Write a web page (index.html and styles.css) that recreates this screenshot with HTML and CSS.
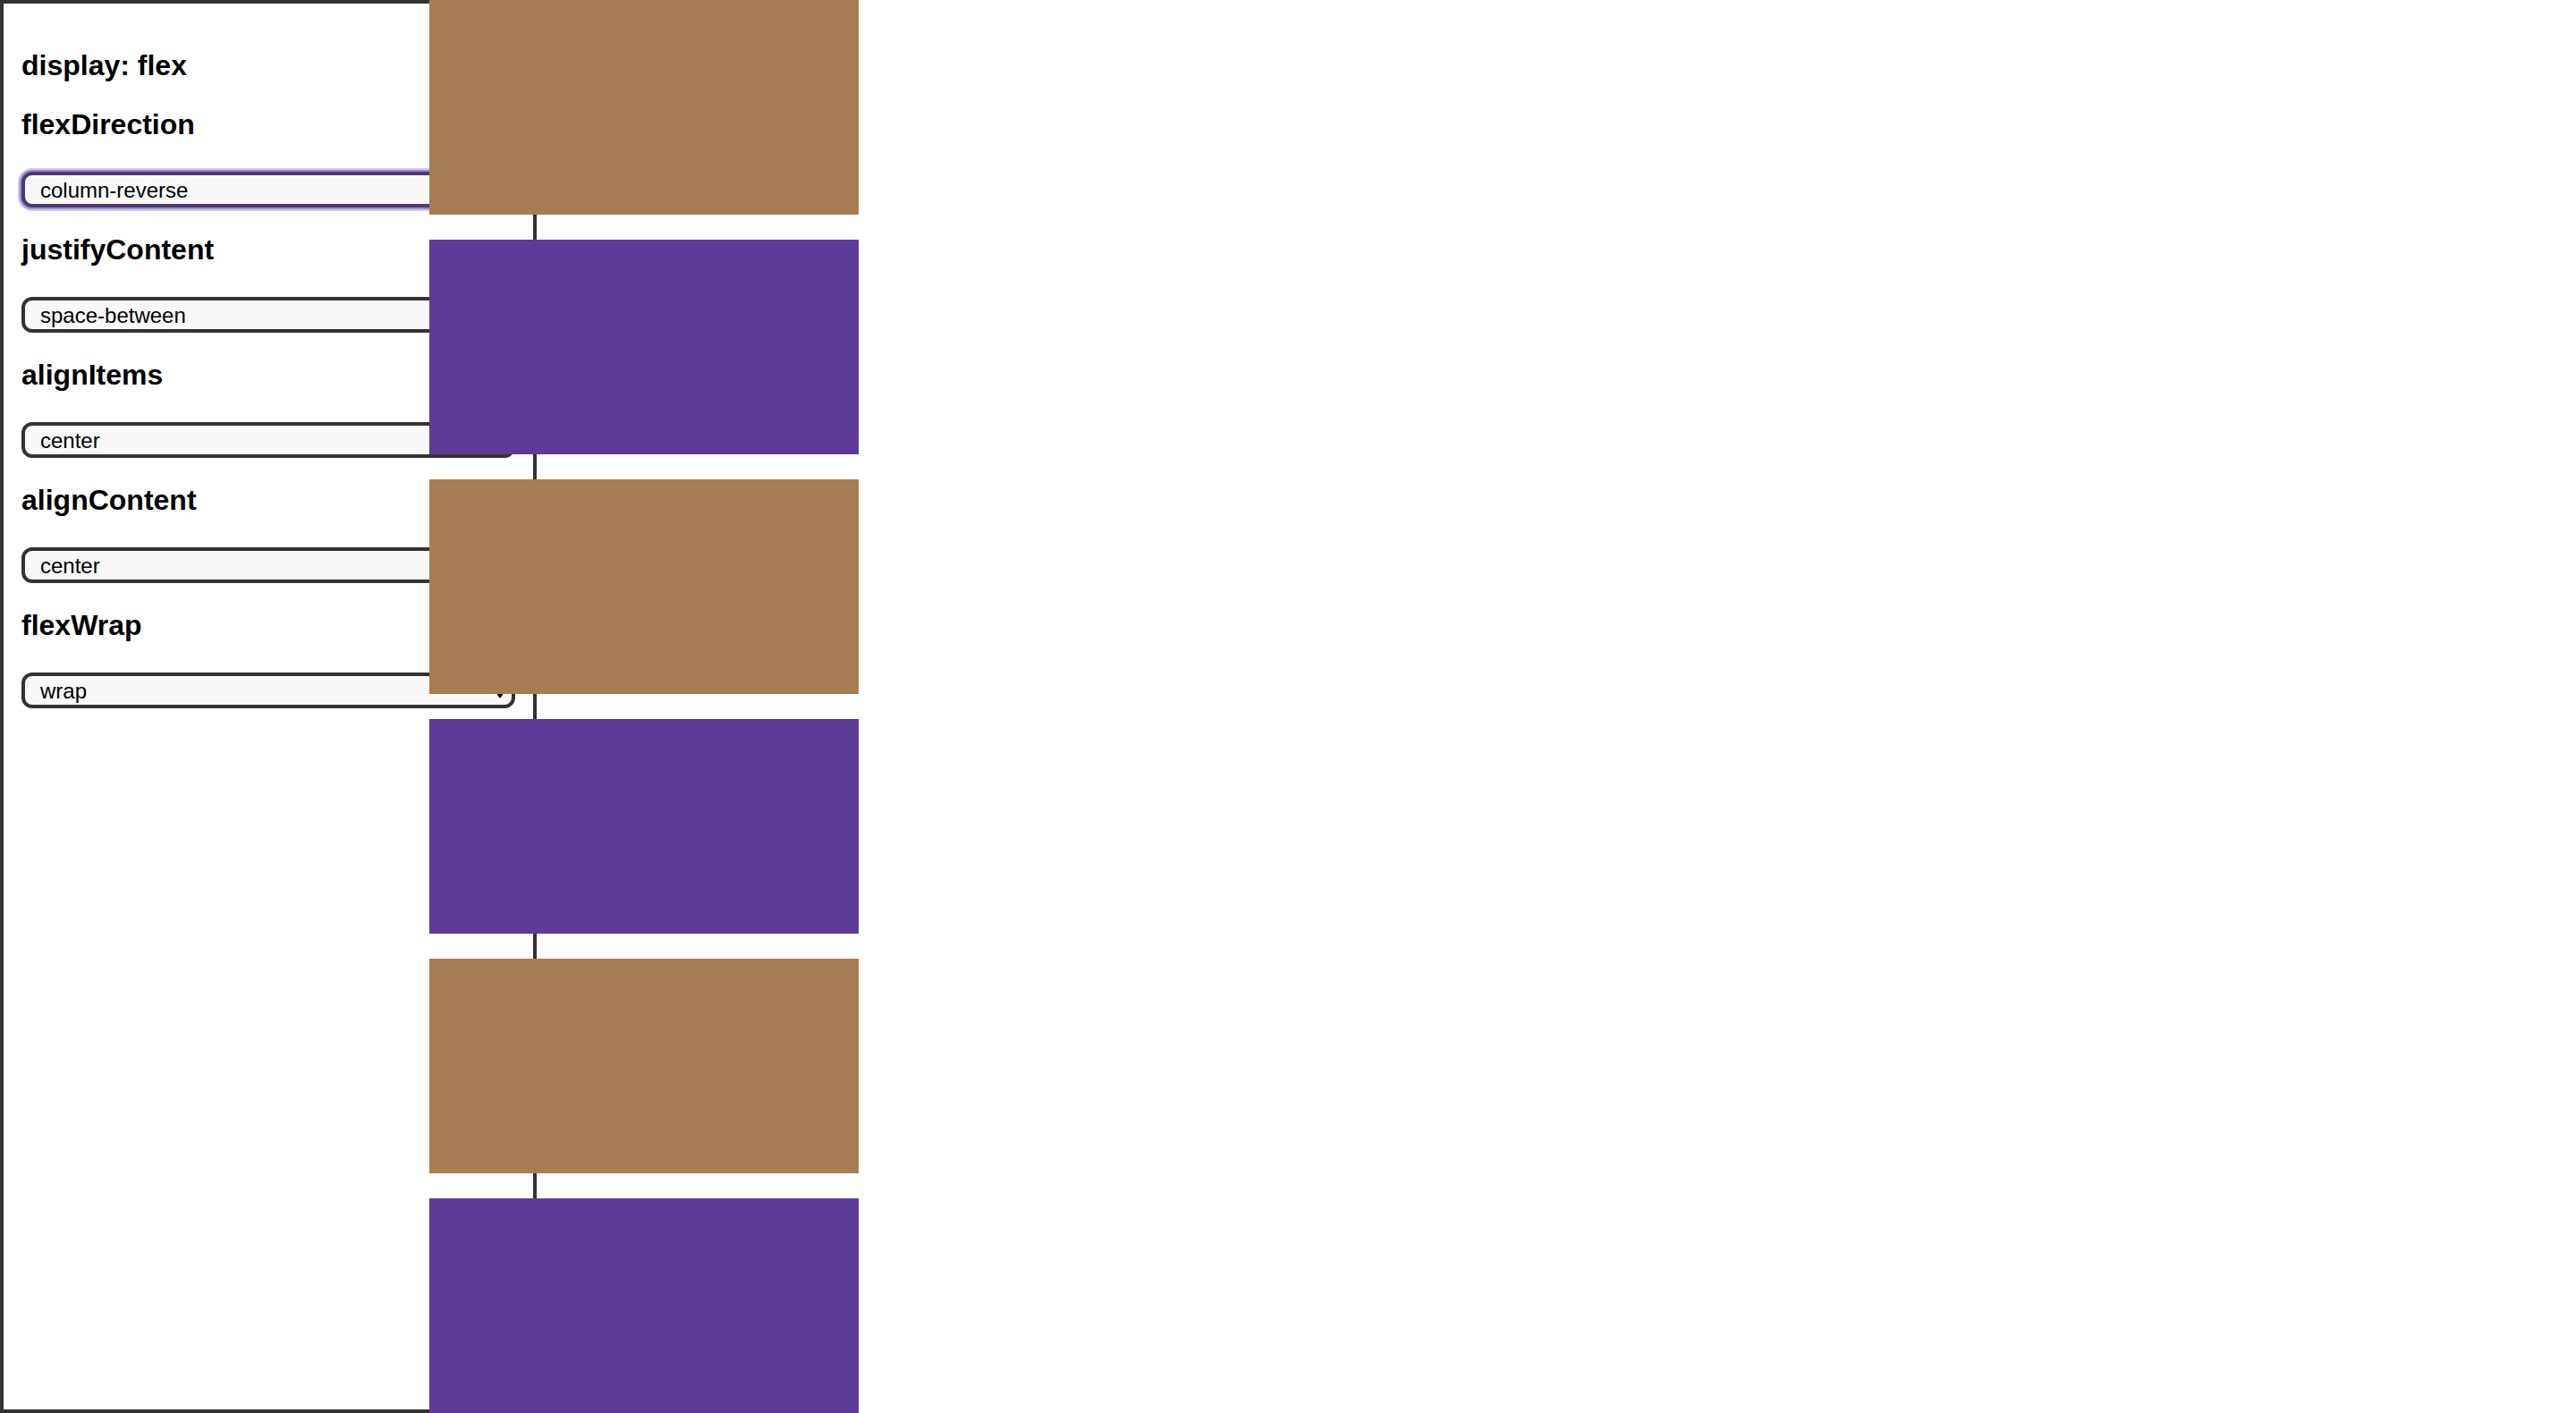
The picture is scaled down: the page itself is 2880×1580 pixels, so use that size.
FILE: index.html
```html
<!DOCTYPE html>
<html lang="en">
<head>
<meta charset="utf-8">
<title>Flexbox playground</title>
<link rel="stylesheet" href="styles.css">
</head>
<body>
<div class="app">
  <aside class="panel">
    <h4 class="title">display: flex</h4>
    <div class="field">
      <h4 class="label">flexDirection</h4>
      <select class="control is-focused">
        <option>row</option>
        <option>row-reverse</option>
        <option>column</option>
        <option selected>column-reverse</option>
      </select>
    </div>
    <div class="field">
      <h4 class="label">justifyContent</h4>
      <select class="control">
        <option>flex-start</option>
        <option>flex-end</option>
        <option>center</option>
        <option selected>space-between</option>
        <option>space-around</option>
      </select>
    </div>
    <div class="field">
      <h4 class="label">alignItems</h4>
      <select class="control">
        <option>flex-start</option>
        <option>flex-end</option>
        <option selected>center</option>
        <option>stretch</option>
        <option>baseline</option>
      </select>
    </div>
    <div class="field">
      <h4 class="label">alignContent</h4>
      <select class="control">
        <option>flex-start</option>
        <option>flex-end</option>
        <option selected>center</option>
        <option>stretch</option>
        <option>space-between</option>
        <option>space-around</option>
      </select>
    </div>
    <div class="field">
      <h4 class="label">flexWrap</h4>
      <select class="control">
        <option>nowrap</option>
        <option selected>wrap</option>
        <option>wrap-reverse</option>
      </select>
    </div>
  </aside>
  <main class="stage">
    <div class="item item-purple"></div>
    <div class="item item-brown"></div>
    <div class="item item-purple"></div>
    <div class="item item-brown"></div>
    <div class="item item-purple"></div>
    <div class="item item-brown"></div>
  </main>
</div>
</body>
</html>
```

FILE: styles.css
```css
html, body {
  margin: 0;
  padding: 0;
  background: #ffffff;
}

body {
  font-family: "Liberation Sans", Arial, Helvetica, sans-serif;
  color: #000000;
}

.app {
  display: grid;
  grid-template-columns: 1440px;
  grid-template-rows: 1580px;
  width: 2880px;
  height: 1580px;
}

.panel {
  grid-area: 1 / 1;
  justify-self: start;
  width: 600px;
  height: 1580px;
  box-sizing: border-box;
  border: 4px solid #333333;
  padding: 49px 20px 0 20px;
}

.title,
.label {
  margin: 0;
  font-size: 32px;
  line-height: 40px;
  font-weight: 700;
}

.title {
  margin-bottom: 26px;
}

.label {
  margin-bottom: 33px;
}

.field {
  margin-bottom: 27px;
}

.control {
  display: block;
  width: 552px;
  height: 40px;
  box-sizing: border-box;
  margin: 0;
  padding: 0 40px 0 17px;
  border: 4px solid #333333;
  border-radius: 12px;
  background-color: #f8f8f8;
  background-image: url("data:image/svg+xml;utf8,<svg xmlns='http://www.w3.org/2000/svg' width='10' height='7' viewBox='0 0 10 7'><path d='M0 0 L10 0 L5 7 Z' fill='%23000000'/></svg>");
  background-repeat: no-repeat;
  background-position: right 8px top 18px;
  background-size: 10px 7px;
  -webkit-appearance: none;
  appearance: none;
  font-family: "Liberation Sans", Arial, Helvetica, sans-serif;
  font-size: 24px;
  color: #000000;
  outline: none;
}

.control.is-focused {
  border-color: #4b3a72;
  box-shadow: 0 0 0 2px #9e89ca, 0 0 0 4px #d2c7e8;
}

.stage {
  grid-area: 1 / 1;
  display: flex;
  flex-direction: column-reverse;
  justify-content: space-between;
  align-items: center;
  align-content: center;
  flex-wrap: wrap;
  width: 1440px;
  height: 1580px;
}

.item {
  width: 480px;
  height: 240px;
  flex: none;
}

.item-purple {
  background: #5d3b96;
}

.item-brown {
  background: #a67d52;
}
```
